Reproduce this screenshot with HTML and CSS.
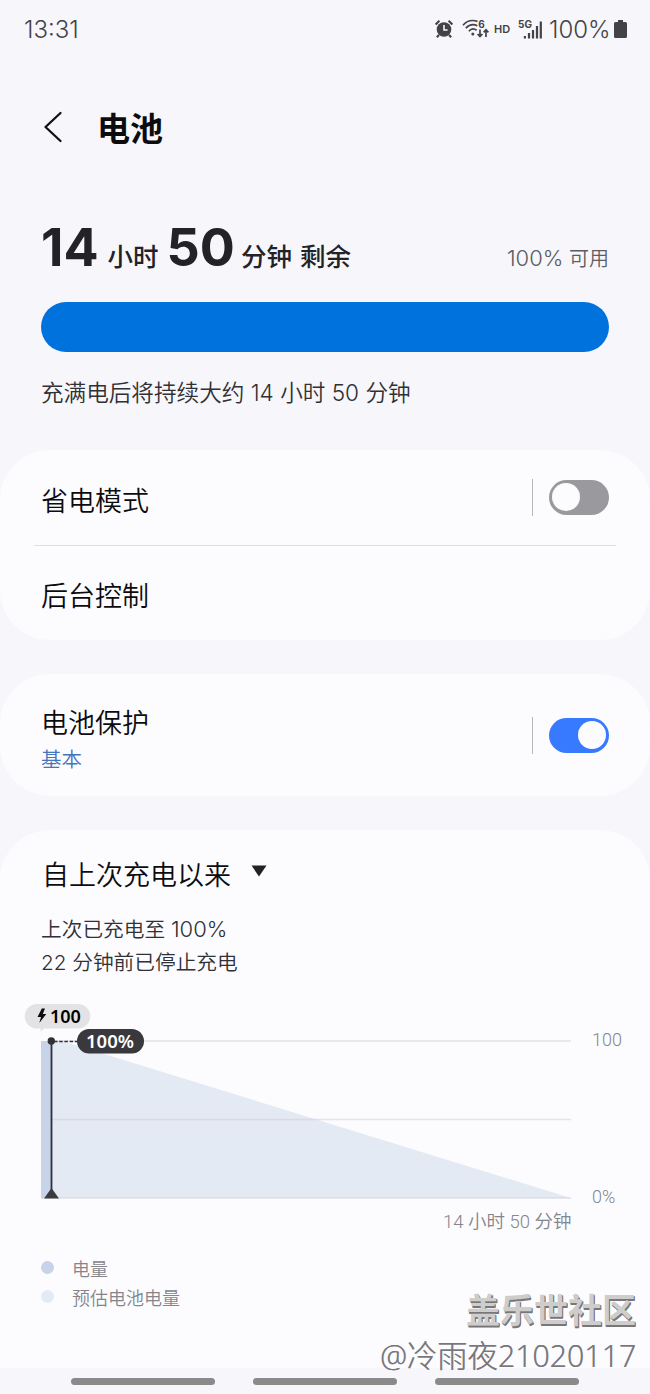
FILE: index.html
```html
<!DOCTYPE html>
<html lang="zh-CN">
<head>
  <meta charset="UTF-8" />
  <meta name="viewport" content="width=device-width, initial-scale=1.0"/>
  <title>电池</title>
  <link rel="stylesheet" href="styles.css">
</head>
<body>

  <div class="status-bar">
    <span class="clock">13:31</span>
    <div class="status-icons">
      <!-- alarm -->
      <svg class="icon-alarm" width="20" height="20" viewBox="0 0 20 20">
        <circle cx="10" cy="10.5" r="7.3" fill="#434347"/>
        <path d="M1.600 5.500L5.400 1.800M14.600 1.800l3.800 3.700M4.9 16l-2 2.3M15.1 16l2 2.3" stroke="#434347" stroke-width="2.100" fill="none"/>
        <path d="M10 6v5h3.6" stroke="#f6f6fb" stroke-width="1.6" fill="none"/>
      </svg>
      <!-- wifi 6 -->
      <svg class="icon-wifi" width="28" height="22" viewBox="0 0 28 22">
        <g stroke="#434347" stroke-width="1.7" fill="none">
          <path d="M1 7.2C5 2.6 10.5 1.7 15.5 3.4"/>
          <path d="M3.8 10.2C7 6.9 11.5 6 15.3 7.8"/>
          <path d="M6.8 13.2c2.2-2.4 5.4-2.7 7.8-.9"/>
          <path d="M18 11.5v7M15.6 16l2.4 2.6 2.4-2.6M24 19v-7M21.6 14.3L24 11.7l2.4 2.6"/>
        </g>
        <circle cx="10.8" cy="16" r="1.5" fill="#434347"/>
        <text x="16.3" y="9.8" class="tiny">6</text>
      </svg>
      <span class="hd">HD</span>
      <!-- 5G signal -->
      <svg class="icon-signal" width="26" height="22" viewBox="0 0 26 22">
        <text x="0" y="9.5" class="tiny">5G</text>
        <path d="M6.9 18v2.5M11 15v5.5M15 12v8.500M19 8v12.500M22.800 3.500v17" stroke="#434347" stroke-width="2.200"/>
      </svg>
      <span class="percent">100%</span>
      <svg class="icon-battery" width="13" height="18" viewBox="0 0 13 18">
        <path d="M4 0h5v2h2.500q1.500 0 1.500 1.500v13q0 1.500-1.500 1.500h-10q-1.500 0-1.500-1.500v-13q0-1.500 1.500-1.500H4z" fill="#434347"/>
      </svg>
    </div>
  </div>

  <div class="header">
    <svg class="back" width="20" height="34" viewBox="0 0 20 34">
      <path d="M17.500 3L2.500 17l15 14" stroke="#111" stroke-width="2.300" fill="none" stroke-linecap="round" stroke-linejoin="round"/>
    </svg>
    <h1>电池</h1>
  </div>

  <div class="summary">
    <div class="remaining">
      <div class="time"><b>14</b><span class="hours">小时</span><b>50</b><span class="minutes">分钟</span><span class="left">剩余</span></div>
      <span class="available"><span>100%</span> 可用</span>
    </div>
    <div class="level"></div>
    <p class="note">充满电后将持续大约 14 小时 50 分钟</p>
  </div>

  <div class="card">
    <div class="row">
      <span class="label">省电模式</span>
      <div class="switch-box"><div class="switch"></div></div>
    </div>
    <div class="row second">
      <span class="label">后台控制</span>
    </div>
  </div>

  <div class="card protect">
    <div>
      <div class="label">电池保护</div>
      <div class="sub">基本</div>
    </div>
    <div class="switch-box"><div class="switch on"></div></div>
  </div>

  <div class="card usage">
    <div class="usage-title">
      <span class="label">自上次充电以来</span>
      <svg width="16" height="12" viewBox="0 0 16 12"><path d="M.5.500h15L8 11.500z" fill="#222226"/></svg>
    </div>
    <p class="last">上次已充电至 <span>100%</span><br>22 分钟前已停止充电</p>

    <!-- battery level chart -->
    <svg class="chart" width="650" height="240" viewBox="0 1000 650 240">
      <path d="M52 1041H62L571 1198H52z" fill="#e4eaf3"/>
      <path d="M41 1041h11v157H41z" fill="#c6d3e8"/>
      <path d="M52 1041H571M52 1119.500H571M41 1198H571" stroke="#c8ccd5" stroke-opacity=".5" stroke-width="1.700"/>
      <path d="M51.500 1041v156" stroke="#303035" stroke-width="1.800"/>
      <path d="M44 1198.500l7.500-10.500 7.500 10.500z" fill="#3b3b40"/>
      <path d="M54 1041.500h24" stroke="#303035" stroke-width="1.700" stroke-dasharray="3.500 1.700"/>
      <circle cx="51.300" cy="1041" r="3.700" fill="#303035"/>
      <path d="M37 1004h41a12 12 0 0 1 0 24.500H44l-3.500 3v-3H37a12 12 0 0 1 0-24.500z" fill="#e3e3e5"/>
      <path d="M41.800 1008.500l-4.300 8.500h3.500l-1.700 6 7-9h-3.500l2.200-5.500z" fill="#0c0c0e"/>
      <text x="50" y="1022.500" class="charge-text">100</text>
      <rect x="77" y="1029" width="67" height="24.500" rx="12.200" fill="#38383d"/>
      <text x="86" y="1048" class="level-text">100%</text>
      <text x="592" y="1046" class="axis">100</text>
      <text x="592" y="1203" class="axis">0%</text>
      <text x="571.500" y="1227.500" class="axis duration" text-anchor="end">14 小时 50 分钟</text>
    </svg>

    <div class="legend">
      <div><i></i>电量</div>
      <div><i class="estimate"></i>预估电池电量</div>
    </div>
  </div>

  <div class="nav-bar"><i></i><i></i><i></i></div>

  <div class="watermark">
    <div class="community">盖乐世社区</div>
    <div class="user">@冷雨夜21020117</div>
  </div>

</body>
</html>
```
FILE: styles.css
```css
* {
  box-sizing: border-box;
}

body {
  margin: 0;
  position: relative;
  width: 650px;
  height: 1394px;
  overflow: hidden;
  background: #f6f6fb;
  color: #0c0c0e;
  font-family: Inter, "Noto Sans CJK SC", sans-serif;
  white-space: nowrap;
}

h1, p {
  margin: 0;
}

svg {
  display: block;
  flex: none;
}

/* Status bar */
.status-bar {
  display: flex;
  justify-content: space-between;
  align-items: center;
  height: 58px;
  padding: 0 23px 0 24px;
  color: #434347;
}

.clock {
  font-size: 24px;
  font-weight: 300;
}

.status-icons {
  display: flex;
  align-items: center;
}

.icon-wifi {
  margin-left: 8px;
}

.tiny {
  font-size: 10px;
  font-weight: 700;
  fill: #434347;
}

.hd {
  width: 17px;
  margin: 0 7px 0 4px;
  font-size: 11px;
  font-weight: 600;
}

.percent {
  width: 62px;
  margin: 0 3px 0 5px;
  font-size: 24px;
  font-weight: 300;
}

/* Header */
.header {
  display: flex;
  align-items: center;
  height: 140px;
  padding-left: 43px;
}

.back {
  margin-top: -2px;
}

h1 {
  margin: 2px 0 0 34px;
  font-size: 33px;
  line-height: 40px;
  font-weight: 700;
}

/* Summary */
.summary {
  height: 252px;
  padding: 20px 41px 0;
}

.remaining {
  display: flex;
  justify-content: space-between;
  align-items: baseline;
  height: 84px;
  line-height: 60px;
}

.time {
  display: flex;
  align-items: baseline;
  color: #222227;
  font-size: 25.5px;
  font-weight: 500;
}

.time b {
  font-size: 52px;
  font-weight: 700;
}

.hours {
  margin: 0 8px 0 9px;
}

.minutes {
  margin-left: 6px;
}

.left {
  margin-left: 8px;
}

.available {
  color: #5c5c62;
  font-size: 20px;
  font-weight: 350;
}

.available span {
  font-size: 22px;
}

.level {
  height: 50px;
  border-radius: 25px;
  background: #0072de;
}

.note {
  margin-top: 25px;
  color: #303035;
  font-size: 22.6px;
  line-height: 32px;
  font-weight: 350;
}

/* Cards */
.card {
  border-radius: 50px;
  background: #fcfcff;
}

.row {
  display: flex;
  justify-content: space-between;
  align-items: center;
  height: 95px;
  margin: 0 34px;
  padding: 0 7px;
}

.second {
  border-top: 1px solid #dedee3;
}

.label {
  font-size: 27px;
  line-height: 36px;
  font-weight: 350;
}

.row .label {
  padding-top: 8px;
}

.switch-box {
  display: flex;
  align-items: center;
  height: 37px;
  padding-left: 16px;
  border-left: 1px solid #b8b8bd;
}

.switch {
  width: 60px;
  height: 35px;
  padding: 3px;
  border-radius: 18px;
  background: #99999e;
}

.switch::before {
  content: "";
  display: block;
  width: 28px;
  height: 28px;
  border-radius: 50%;
  background: #fcfcff;
}

.switch.on {
  background: #387aff;
}

.switch.on::before {
  margin-left: 26px;
}

.protect {
  display: flex;
  justify-content: space-between;
  align-items: center;
  height: 122px;
  margin-top: 34px;
  padding: 0 41px;
}

.protect .label {
  padding-top: 10px;
}

.sub {
  margin-top: 3px;
  color: #4674bd;
  font-size: 20.5px;
  line-height: 30px;
  font-weight: 350;
}

.usage {
  height: 538px;
  margin-top: 34px;
  padding-top: 28px;
  border-radius: 50px 50px 0 0;
}

.usage-title {
  display: flex;
  align-items: center;
  gap: 20px;
  padding-left: 42px;
}

.usage-title svg {
  margin-top: -10px;
}

.last {
  margin: 19px 0 0 41px;
  color: #303035;
  font-size: 20.7px;
  line-height: 33px;
  font-weight: 350;
}

.last span {
  font-size: 22px;
}

/* Chart */
.chart {
  margin-top: 21px;
}

.charge-text {
  font-family: "Noto Sans", sans-serif;
  font-size: 18px;
  font-weight: 600;
}

.level-text {
  font-family: "Noto Sans", sans-serif;
  font-size: 18.500px;
  font-weight: 600;
  fill: #fff;
}

.axis {
  font-family: Roboto, "Noto Sans CJK SC", sans-serif;
  font-size: 18px;
  font-weight: 350;
  fill: #85858b;
}

.duration {
  font-size: 18.5px;
}

.legend {
  padding: 15px 0 0 41px;
  color: #85858b;
  font-size: 18px;
  line-height: 29px;
  font-weight: 350;
}

.legend div {
  display: flex;
  align-items: center;
}

.legend i {
  width: 13px;
  height: 13px;
  margin: -5px 18px 0 0;
  border-radius: 50%;
  background: #c6d3e8;
}

.legend .estimate {
  background: #e4eaf3;
}

/* Navigation */
.nav-bar {
  display: flex;
  gap: 38px;
  height: 26px;
  padding: 10px 0 0 71px;
}

.nav-bar i {
  width: 144px;
  height: 7px;
  border-radius: 4px;
  background: #8a8a8a;
}

.watermark {
  position: absolute;
  right: 14px;
  bottom: 16px;
  text-align: right;
  color: #77777b;
}

.community {
  color: #cfcdcc;
  font-size: 34px;
  line-height: 46px;
  font-weight: 700;
  text-shadow: 1px 1px 0 #77777b, 1px 2px 0 #77777b;
}

.user {
  font-family: "Open Sans", "Noto Sans CJK SC", sans-serif;
  font-size: 30.3px;
  line-height: 44px;
  font-weight: 300;
  text-shadow: 0.5px 0 0 #8a8a8e;
}
```
